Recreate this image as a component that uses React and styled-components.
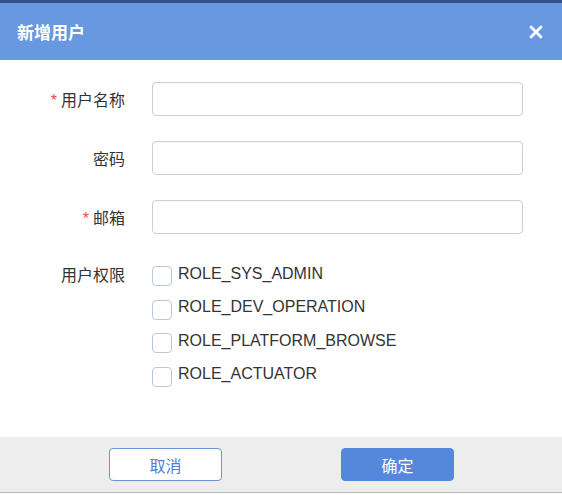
import styled, { createGlobalStyle } from 'styled-components'

const Global = createGlobalStyle`
  html, body { margin:0; padding:0; background:#fff; }
  body { font-family:"Liberation Sans", "Noto Sans CJK SC", sans-serif; }
`

const Dialog = styled.div`
  width:562px;
  height:495px;
  display:flex;
  flex-direction:column;
  background:#fff;
`
const TopBand = styled.div`
  height:3px;
  background:#34528c;
`
const Header = styled.div`
  height:57px;
  background:#6898e0;
  display:flex;
  align-items:center;
  justify-content:space-between;
  padding:0 18px 0 17px;
`
const Title = styled.h2`
  margin:0;
  color:#fff;
  font-size:17px;
  font-weight:bold;
  font-family:"Noto Sans CJK SC", sans-serif;
`
const Close = styled.button`
  border:none;
  background:none;
  padding:0;
  width:16px;
  height:16px;
  display:flex;
  align-items:center;
  justify-content:center;
  cursor:pointer;
`
const Body = styled.div`
  flex:1;
  padding:22px 39px 0 0;
  display:grid;
  grid-template-columns:125px 1fr;
  grid-auto-rows:auto;
  column-gap:27px;
  row-gap:25px;
  align-content:start;
`
const Label = styled.label`
  font-family:"Noto Sans CJK SC", sans-serif;
  font-size:16px;
  color:#333;
  text-align:right;
  height:${p => p.top ? '31px' : '34px'};
  line-height:${p => p.top ? '31px' : '34px'};
  overflow:hidden;
`
const Star = styled.span`
  color:#e94b4b;
  margin-right:4px;
  font-family:"Liberation Sans", sans-serif;
`
const Input = styled.input`
  box-sizing:border-box;
  height:34px;
  border:1px solid #cfcfcf;
  border-radius:4px;
  outline:none;
  padding:0 10px;
  font-size:15px;
  box-shadow:inset 0 1px 1px rgba(0,0,0,0.03);
`
const Checks = styled.div`
  display:flex;
  flex-direction:column;
  margin-top:-2px;
`
const CheckRow = styled.label`
  display:flex;
  align-items:center;
  height:33.5px;
  font-size:16px;
  color:#333;
  font-family:"Liberation Sans", sans-serif;
`
const Box = styled.span`
  box-sizing:border-box;
  width:20px;
  height:20px;
  border:1px solid #b9c9dc;
  border-radius:4px;
  background:#fff;
  margin-right:6px;
  margin-top:5px;
`
const Footer = styled.div`
  height:55px;
  background:#ededed;
  border-bottom:1px solid #b8b8b8;
  margin-bottom:2px;
  display:flex;
  align-items:center;
  padding-left:109px;
  gap:119px;
`
const Btn = styled.button`
  box-sizing:border-box;
  width:113px;
  height:33px;
  border-radius:4px;
  font-size:16px;
  font-family:"Noto Sans CJK SC", sans-serif;
  cursor:pointer;
  border:1px solid ${p => p.primary ? '#5588dd' : '#6a93d8'};
  background:${p => p.primary ? '#5588dd' : '#fff'};
  color:${p => p.primary ? '#fff' : '#4d80d6'};
`

const roles = ['ROLE_SYS_ADMIN', 'ROLE_DEV_OPERATION', 'ROLE_PLATFORM_BROWSE', 'ROLE_ACTUATOR']

const App = () => {
  return (
    <Dialog>
      <Global />
      <TopBand />
      <Header>
        <Title>新增用户</Title>
        <Close>
          <svg width="14" height="14" viewBox="0 0 14 14">
            <path d="M2 2 L12 12 M12 2 L2 12" stroke="#fff" strokeWidth="2.8" strokeLinecap="round" />
          </svg>
        </Close>
      </Header>
      <Body>
        <Label><Star>*</Star>用户名称</Label>
        <Input />
        <Label>密码</Label>
        <Input type="password" />
        <Label><Star>*</Star>邮箱</Label>
        <Input />
        <Label top>用户权限</Label>
        <Checks>
          {roles.map(r => (
            <CheckRow key={r}><Box />{r}</CheckRow>
          ))}
        </Checks>
      </Body>
      <Footer>
        <Btn>取消</Btn>
        <Btn primary>确定</Btn>
      </Footer>
    </Dialog>
  )
}

export default App
